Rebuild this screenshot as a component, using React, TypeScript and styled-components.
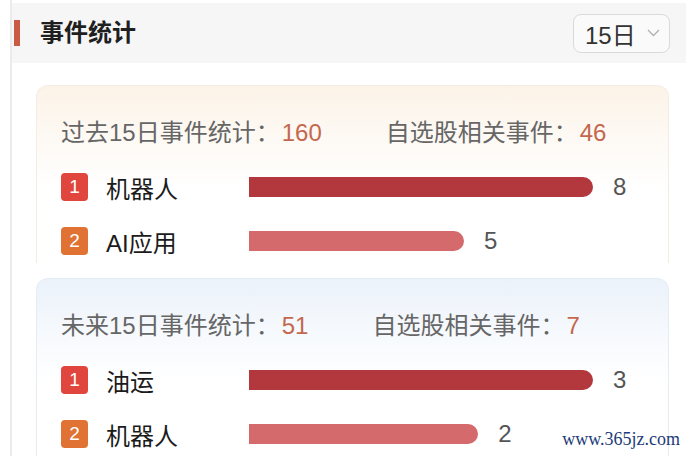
import React from 'react';
import styled, { createGlobalStyle } from 'styled-components';

const GlobalStyle = createGlobalStyle`
  html, body {
    margin: 0;
    padding: 0;
    background: #fff;
    overflow: hidden;
  }
  body {
    font-family: "Liberation Sans", "Noto Sans CJK SC", sans-serif;
  }
`;

const Panel = styled.div`
  position: relative;
  margin-left: 10px;
  border-left: 2px solid #ebebeb;
  padding-top: 3px;
  height: 456px;
  box-sizing: border-box;
`;

const Header = styled.div`
  height: 60px;
  background: #f6f6f6;
  display: flex;
  align-items: center;
  justify-content: space-between;
  padding: 0 16px 0 2px;
`;

const TitleWrap = styled.div`
  display: flex;
  align-items: center;
  gap: 20px;
`;

const Accent = styled.span`
  width: 6px;
  height: 26px;
  background: #cb5a45;
`;

const Title = styled.h1`
  margin: 0;
  font-size: 24px;
  font-weight: 700;
  color: #1f1f1f;
  line-height: 1;
`;

const Select = styled.div`
  width: 97px;
  height: 39px;
  box-sizing: border-box;
  border: 1px solid #dadada;
  border-radius: 8px;
  background: #fafafa;
  display: flex;
  align-items: center;
  padding-left: 11px;
  gap: 11px;
  font-size: 24px;
  color: #333;
`;

const Cards = styled.div`
  display: flex;
  flex-direction: column;
  gap: 15px;
  padding: 22px 17px 0 24px;
`;

const Card = styled.div<{ $tone: 'warm' | 'cool' }>`
  height: 178px;
  box-sizing: border-box;
  border: 1px solid ${p => (p.$tone === 'warm' ? '#f3ece5' : '#e5ecf4')};
  border-bottom: none;
  border-radius: 12px 12px 0 0;
  padding: 27px 0 0 24px;
  background: ${p =>
    p.$tone === 'warm'
      ? 'linear-gradient(180deg, #fcf3e8 0%, #fdf9f4 30%, #ffffff 58%)'
      : 'linear-gradient(180deg, #ebf2fa 0%, #f6f9fd 30%, #ffffff 58%)'};
  overflow: hidden;
`;

const Stats = styled.div`
  display: flex;
  align-items: center;
  height: 34px;
  font-size: 24px;
  color: #666;
  white-space: nowrap;
`;

const StatItem = styled.span`
  & + & {
    margin-left: 64px;
  }
`;

const Count = styled.span`
  color: #c4674f;
  margin-left: 2px;
`;

const Rows = styled.div`
  display: flex;
  flex-direction: column;
  gap: 26px;
  margin-top: 26px;
`;

const Row = styled.div`
  display: flex;
  align-items: center;
  height: 28px;
`;

const Badge = styled.span<{ $color: string }>`
  width: 27px;
  height: 28px;
  border-radius: 4px;
  background: ${p => p.$color};
  color: #fff;
  font-size: 19px;
  display: flex;
  align-items: center;
  justify-content: center;
`;

const Label = styled.span`
  width: 143px;
  margin-left: 18px;
  font-size: 24px;
  color: #1b1b1b;
  white-space: nowrap;
`;

const Bar = styled.div<{ $color: string }>`
  height: 20px;
  background: ${p => p.$color};
  border-radius: 0 10px 10px 0;
`;

const Value = styled.span`
  margin-left: 20px;
  font-size: 24px;
  color: #555;
`;

const Watermark = styled.div`
  position: absolute;
  right: 6px;
  bottom: 6px;
  font-family: "Liberation Serif", "DejaVu Serif", serif;
  font-size: 18px;
  color: #1d3b78;
`;

type Item = { name: string; value: number };

type Block = {
  tone: 'warm' | 'cool';
  period: string;
  total: number;
  related: number;
  items: Item[];
};

const blocks: Block[] = [
  {
    tone: 'warm',
    period: '过去15日事件统计：',
    total: 160,
    related: 46,
    items: [
      { name: '机器人', value: 8 },
      { name: 'AI应用', value: 5 },
    ],
  },
  {
    tone: 'cool',
    period: '未来15日事件统计：',
    total: 51,
    related: 7,
    items: [
      { name: '油运', value: 3 },
      { name: '机器人', value: 2 },
    ],
  },
];

const badgeColors = ['#e0463d', '#e07234'];
const barColors = ['#b3383e', '#d46a6c'];
const TRACK = 344;

const Chevron = () => (
  <svg width="13" height="8" viewBox="0 0 13 8">
    <polyline points="1,1 6.5,6.5 12,1" fill="none" stroke="#b0b0b0" strokeWidth="1.3" />
  </svg>
);

const App: React.FC = () => {
  return (
    <>
      <GlobalStyle />
      <Panel>
        <Header>
          <TitleWrap>
            <Accent />
            <Title>事件统计</Title>
          </TitleWrap>
          <Select>
            15日 <Chevron />
          </Select>
        </Header>

        <Cards>
          {blocks.map(block => {
            const max = Math.max(...block.items.map(i => i.value));
            return (
              <Card key={block.period} $tone={block.tone}>
                <Stats>
                  <StatItem>
                    {block.period}
                    <Count>{block.total}</Count>
                  </StatItem>
                  <StatItem>
                    自选股相关事件：<Count>{block.related}</Count>
                  </StatItem>
                </Stats>
                <Rows>
                  {block.items.map((item, idx) => (
                    <Row key={item.name}>
                      <Badge $color={badgeColors[idx]}>{idx + 1}</Badge>
                      <Label>{item.name}</Label>
                      <Bar
                        $color={barColors[idx]}
                        style={{ width: (item.value / max) * TRACK }}
                      />
                      <Value>{item.value}</Value>
                    </Row>
                  ))}
                </Rows>
              </Card>
            );
          })}
        </Cards>

        <Watermark>www.365jz.com</Watermark>
      </Panel>
    </>
  );
};

export default App;
